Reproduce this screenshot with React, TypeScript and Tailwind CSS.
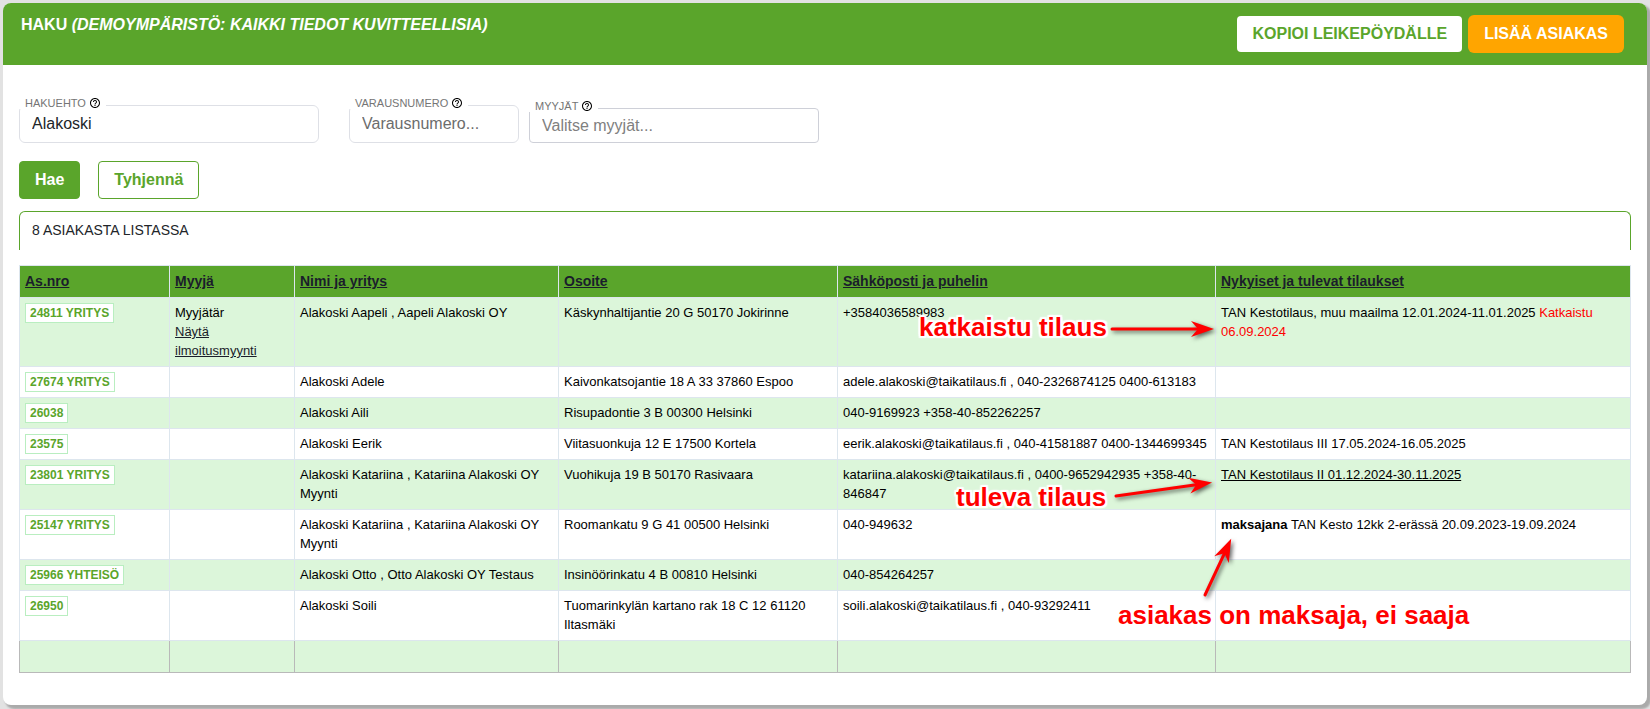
import type { ReactNode } from "react"

interface Customer {
    id: string
    seller?: ReactNode
    name: string
    address: string
    contact: string
    orders?: ReactNode
}

const headings = [
    "As.nro",
    "Myyjä",
    "Nimi ja yritys",
    "Osoite",
    "Sähköposti ja puhelin",
    "Nykyiset ja tulevat tilaukset",
]

const customers: Customer[] = [
    {
        id: "24811 YRITYS",
        seller: (
            <>
                Myyjätär
                <br />
                <a href="#ilmoitusmyynti" className="text-[#1a1d2b] underline">
                    Näytä ilmoitusmyynti
                </a>
            </>
        ),
        name: "Alakoski Aapeli , Aapeli Alakoski OY",
        address: "Käskynhaltijantie 20 G 50170 Jokirinne",
        contact: "+3584036589983",
        orders: (
            <>
                TAN Kestotilaus, muu maailma 12.01.2024-11.01.2025{" "}
                <span className="text-[#ff0000]">Katkaistu 06.09.2024</span>
            </>
        ),
    },
    {
        id: "27674 YRITYS",
        name: "Alakoski Adele",
        address: "Kaivonkatsojantie 18 A 33 37860 Espoo",
        contact: "adele.alakoski@taikatilaus.fi , 040-2326874125 0400-613183",
    },
    {
        id: "26038",
        name: "Alakoski Aili",
        address: "Risupadontie 3 B 00300 Helsinki",
        contact: "040-9169923 +358-40-852262257",
    },
    {
        id: "23575",
        name: "Alakoski Eerik",
        address: "Viitasuonkuja 12 E 17500 Kortela",
        contact: "eerik.alakoski@taikatilaus.fi , 040-41581887 0400-1344699345",
        orders: "TAN Kestotilaus III 17.05.2024-16.05.2025",
    },
    {
        id: "23801 YRITYS",
        name: "Alakoski Katariina , Katariina Alakoski OY Myynti",
        address: "Vuohikuja 19 B 50170 Rasivaara",
        contact: "katariina.alakoski@taikatilaus.fi , 0400-9652942935 +358-40-846847",
        orders: <span className="underline">TAN Kestotilaus II 01.12.2024-30.11.2025</span>,
    },
    {
        id: "25147 YRITYS",
        name: "Alakoski Katariina , Katariina Alakoski OY Myynti",
        address: "Roomankatu 9 G 41 00500 Helsinki",
        contact: "040-949632",
        orders: (
            <>
                <b>maksajana</b> TAN Kesto 12kk 2-erässä 20.09.2023-19.09.2024
            </>
        ),
    },
    {
        id: "25966 YHTEISÖ",
        name: "Alakoski Otto , Otto Alakoski OY Testaus",
        address: "Insinöörinkatu 4 B 00810 Helsinki",
        contact: "040-854264257",
    },
    {
        id: "26950",
        name: "Alakoski Soili",
        address: "Tuomarinkylän kartano rak 18 C 12 61120 Iltasmäki",
        contact: "soili.alakoski@taikatilaus.fi , 040-93292411",
    },
]

function HelpIcon() {
    return (
        <svg width="12" height="12" viewBox="0 0 24 24" fill="#000" className="shrink-0">
            <path d="M11 18h2v-2h-2v2zm1-16C6.48 2 2 6.48 2 12s4.48 10 10 10 10-4.48 10-10S17.52 2 12 2zm0 18c-4.41 0-8-3.59-8-8s3.59-8 8-8 8 3.59 8 8-3.59 8-8 8zm0-14c-2.21 0-4 1.79-4 4h2c0-1.1.9-2 2-2s2 .9 2 2c0 2-3 1.75-3 5h2c0-2.25 3-2.5 3-5 0-2.21-1.79-4-4-4z" />
        </svg>
    )
}

interface FieldProps {
    id: string
    label: string
    className: string
    inputClassName: string
    placeholder?: string
    defaultValue?: string
}

function Field({ id, label, className, inputClassName, placeholder, defaultValue }: FieldProps) {
    return (
        <div className={`relative ${className}`}>
            <input
                id={id}
                type="text"
                placeholder={placeholder}
                defaultValue={defaultValue}
                className={`block w-full border bg-white px-3 text-base text-[#212529] outline-none ${inputClassName}`}
            />
            {/* the label sits over the top border */}
            <label
                htmlFor={id}
                className="absolute -top-2 left-0 flex h-3 items-center gap-[3px] bg-white pr-[5px] pl-1.5 text-[11px] text-[#757575]"
            >
                {label}
                <HelpIcon />
            </label>
        </div>
    )
}

function Note({ children, className }: { children: ReactNode; className: string }) {
    return (
        <span
            className={`absolute text-[26px] leading-7 font-bold whitespace-nowrap text-[#ff0000] [text-shadow:2px_0_1px_#fff,-2px_0_1px_#fff,0_2px_1px_#fff,0_-2px_1px_#fff,2px_2px_1px_#fff,-2px_2px_1px_#fff,2px_-2px_1px_#fff,-2px_-2px_1px_#fff,0_0_4px_#fff] ${className}`}
        >
            {children}
        </span>
    )
}

// Arrow pointing right from the origin, turned by angle
function Arrow({ x, y, length, angle }: { x: number; y: number; length: number; angle: number }) {
    const neck = length - 16
    const back = length - 23
    return (
        <g transform={`translate(${x} ${y}) rotate(${angle})`}>
            <path d={`M0 0H${neck}`} stroke="#f00" strokeWidth="3" strokeLinecap="round" />
            <path d={`M${length} 0L${back} -8L${neck} 0L${back} 8Z`} fill="#f00" />
        </g>
    )
}

export default function App() {
    return (
        <div className="bg-[#e2e2e2] p-[3px] pb-[5px] font-['Liberation_Sans',Arial,sans-serif] text-[#212529]">
            <div className="overflow-hidden rounded-lg bg-white shadow-[3px_3px_2px_1px_#aaa]">
                <header className="flex h-[62px] items-start justify-between bg-[#5aa52b] pr-[23px] pl-[18px]">
                    <h1 className="pt-2.5 text-base leading-6 font-bold text-white">
                        HAKU <i>(DEMOYMPÄRISTÖ: KAIKKI TIEDOT KUVITTEELLISIA)</i>
                    </h1>
                    <div className="flex items-center gap-1.5 pt-3">
                        <button
                            type="button"
                            className="h-9 rounded bg-white px-[15px] text-base font-bold text-[#5aa52b]"
                        >
                            KOPIOI LEIKEPÖYDÄLLE
                        </button>
                        <button
                            type="button"
                            className="h-[38px] rounded-md bg-[#ffa500] px-4 text-base font-bold text-white"
                        >
                            LISÄÄ ASIAKAS
                        </button>
                    </div>
                </header>

                <main className="px-4 pt-10 pb-8">
                    <form onSubmit={(e) => e.preventDefault()}>
                        <div className="flex items-end">
                            <Field
                                id="hakuehto"
                                label="HAKUEHTO"
                                defaultValue="Alakoski"
                                className="w-[300px]"
                                inputClassName="h-[38px] rounded-md border-[#dee0e6]"
                            />
                            <Field
                                id="varausnumero"
                                label="VARAUSNUMERO"
                                placeholder="Varausnumero..."
                                className="ml-[30px] w-[170px]"
                                inputClassName="h-[38px] rounded-md border-[#dee0e6] placeholder:text-[#6c6c6c]"
                            />
                            <Field
                                id="myyjat"
                                label="MYYJÄT"
                                placeholder="Valitse myyjät..."
                                className="ml-2.5 w-[290px]"
                                inputClassName="h-[35px] rounded border-[#ced0d8] placeholder:text-[#808080]"
                            />
                        </div>
                        <div className="mt-[18px] flex gap-[18px]">
                            <button
                                type="submit"
                                className="h-[38px] rounded border border-[#5aa52b] bg-[#5aa52b] px-[15px] text-base font-bold text-white"
                            >
                                Hae
                            </button>
                            <button
                                type="reset"
                                className="h-[38px] rounded border border-[#5aa52b] bg-white px-[15px] text-base font-bold text-[#5aa52b]"
                            >
                                Tyhjennä
                            </button>
                        </div>
                    </form>

                    <div className="mt-3 h-[39px] rounded-t-md border border-b-0 border-[#5aa52b] px-3 pt-2 text-sm">
                        8 ASIAKASTA LISTASSA
                    </div>

                    <div className="relative mt-[15px]">
                        <table className="w-full table-fixed border-collapse text-[13px] leading-[19px] text-black">
                            <colgroup>
                                <col className="w-[150px]" />
                                <col className="w-[125px]" />
                                <col className="w-[264px]" />
                                <col className="w-[279px]" />
                                <col className="w-[378px]" />
                                <col />
                            </colgroup>
                            <thead>
                                <tr className="bg-[#5aa52b] text-left text-sm leading-[19px]">
                                    {headings.map((heading) => (
                                        <th key={heading} className="border border-[#dde6ee] px-[5px] py-1.5">
                                            <a href="#jarjesta" className="text-[#1a1d2b] underline">
                                                {heading}
                                            </a>
                                        </th>
                                    ))}
                                </tr>
                            </thead>
                            <tbody>
                                {customers.map((customer) => (
                                    <tr
                                        key={customer.id}
                                        className="align-top odd:bg-[#dcf6da] [&>td]:border [&>td]:border-[#dde6ee] [&>td]:px-[5px] [&>td]:pt-[5px]"
                                    >
                                        <td className="pb-[5px]">
                                            <a
                                                href="#asiakas"
                                                className="flex h-5 w-fit items-center border border-[#b9eec0] bg-white px-1 text-xs font-bold text-[#5aa52b]"
                                            >
                                                {customer.id}
                                            </a>
                                        </td>
                                        <td className="pb-1.5">{customer.seller}</td>
                                        <td className="pb-1.5">{customer.name}</td>
                                        <td className="pb-1.5">{customer.address}</td>
                                        <td className="pb-1.5">{customer.contact}</td>
                                        <td className="pb-1.5">{customer.orders}</td>
                                    </tr>
                                ))}
                            </tbody>
                            <tfoot>
                                <tr className="h-8 bg-[#dcf6da]">
                                    {headings.map((heading) => (
                                        <td key={heading} className="border border-t-0 border-[#b9b9b9]" />
                                    ))}
                                </tr>
                            </tfoot>
                        </table>

                        {/* notes drawn over the table */}
                        <div className="pointer-events-none absolute inset-0">
                            <svg className="absolute inset-0 size-full drop-shadow-[2px_2px_2px_rgba(0,0,0,0.6)]">
                                <Arrow x={1093} y={64} length={102} angle={0} />
                                <Arrow x={1097} y={231} length={97} angle={-8} />
                                <Arrow x={1186} y={330} length={62} angle={-65} />
                            </svg>
                            <Note className="top-[48px] left-[900px]">katkaistu tilaus</Note>
                            <Note className="top-[218px] left-[937px]">tuleva tilaus</Note>
                            <Note className="top-[336px] left-[1099px]">asiakas on maksaja, ei saaja</Note>
                        </div>
                    </div>
                </main>
            </div>
        </div>
    )
}
